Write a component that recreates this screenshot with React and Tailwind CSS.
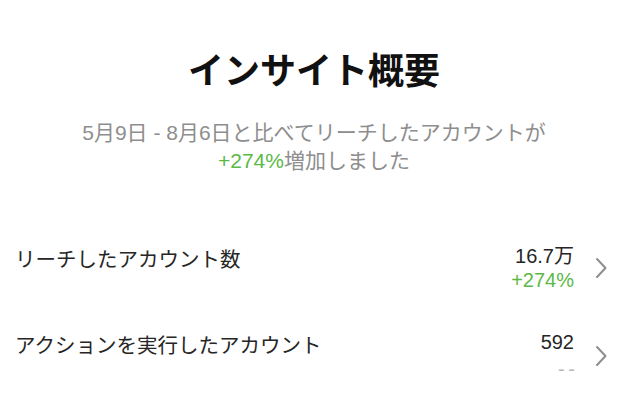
const FONT = { fontFamily: '"Liberation Sans", "Noto Sans CJK JP", sans-serif' }

function Chevron() {
  return (
    <svg width="14" height="22" viewBox="0 0 14 22" fill="none" className="shrink-0">
      <path d="M3 2 L11.5 11 L3 20" stroke="#8e8e8e" strokeWidth="2" strokeLinecap="round" strokeLinejoin="round" />
    </svg>
  )
}

function MetricRow({ label, value, change, changeClass }) {
  return (
    <div className="flex items-center">
      <div className="flex-1 self-start pt-[4px] text-[20.5px] leading-[24px] text-[#262626]">{label}</div>
      <div className="flex flex-col items-end text-[20px] leading-[24px]">
        <span className="text-[#262626]">{value}</span>
        <span className={changeClass}>{change}</span>
      </div>
      <div className="ml-[20px]">
        <Chevron />
      </div>
    </div>
  )
}

export default function App() {
  return (
    <div className="w-[628px] h-[408px] bg-white overflow-hidden" style={FONT}>
      <div className="pt-[50px] flex flex-col items-center">
        <h1 className="text-[36px] leading-[44px] font-bold text-[#111]">インサイト概要</h1>
        <p className="mt-[25px] text-center text-[21px] leading-[28px] text-[#8e8e8e]">
          5月9日 - 8月6日と比べてリーチしたアカウントが
          <br />
          <span className="text-[#5cb946]">+274%</span>増加しました
        </p>
      </div>
      <div className="mt-[69px] pl-[15px] pr-[20px] flex flex-col gap-[38px]">
        <MetricRow label="リーチしたアカウント数" value="16.7万" change="+274%" changeClass="text-[#5cb946]" />
        <MetricRow label="アクションを実行したアカウント" value="592" change="- -" changeClass="text-[#b8b8b8] mt-[3px] tracking-[-1px]" />
      </div>
    </div>
  )
}
